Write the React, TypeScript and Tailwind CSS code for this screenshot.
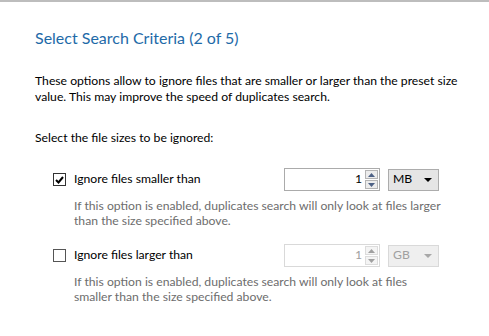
import React from "react";

const font = { fontFamily: 'Lato, "Open Sans", sans-serif' };

function Checkbox({ checked }: { checked: boolean }) {
  return (
    <div className={`w-[13px] h-[13px] border flex items-center justify-center bg-white ${checked ? "border-[#333333]" : "border-[#555555]"}`}>
      {checked && (
        <svg width="9" height="8" viewBox="0 0 9 8">
          <path d="M1 4 L3.5 6.5 L8 1" stroke="#000" strokeWidth="2" fill="none" />
        </svg>
      )}
    </div>
  );
}

function Spinner({ disabled }: { disabled?: boolean }) {
  const border = disabled ? "border-[#d9d9d9]" : "border-[#ababab]";
  const arrow = disabled ? "#a0a0a0" : "#4d6185";
  return (
    <div className={`w-[96px] h-[23px] border ${border} bg-white flex items-center`}>
      <div className={`flex-1 text-right pr-[3px] text-[12.2px] ${disabled ? "text-[#a0a0a0]" : "text-black"}`}>1</div>
      <div className="w-[13px] h-full flex flex-col gap-[1px] py-[1px] mr-[1px]">
        <div className={`flex-1 border ${disabled ? "border-[#dcdcdc] bg-[#f4f4f4]" : "border-[#b4b4b4] bg-[#ececec]"} flex items-center justify-center`}>
          <svg width="7" height="4" viewBox="0 0 7 4"><path d="M0 4 L3.5 0 L7 4 Z" fill={arrow} /></svg>
        </div>
        <div className={`flex-1 border ${disabled ? "border-[#dcdcdc] bg-[#f4f4f4]" : "border-[#b4b4b4] bg-[#ececec]"} flex items-center justify-center`}>
          <svg width="7" height="4" viewBox="0 0 7 4"><path d="M0 0 L7 0 L3.5 4 Z" fill={arrow} /></svg>
        </div>
      </div>
    </div>
  );
}

function Dropdown({ label, disabled }: { label: string; disabled?: boolean }) {
  return (
    <div className={`w-[51px] h-[22px] border flex items-center justify-between pl-[4px] pr-[6px] text-[12.2px] ${disabled ? "border-[#d9d9d9] bg-[#efefef] text-[#a0a0a0]" : "border-[#acacac] bg-[#e5e5e5] text-black"}`}>
      <span>{label}</span>
      <svg width="8" height="4" viewBox="0 0 8 4"><path d="M0 0 L8 0 L4 4 Z" fill={disabled ? "#a8a8a8" : "#000"} /></svg>
    </div>
  );
}

function Option({ checked, label, unit, desc }: { checked: boolean; label: string; unit: string; desc: React.ReactNode }) {
  return (
    <div className="pl-[18px]">
      <div className="flex items-center h-[23px]">
        <Checkbox checked={checked} />
        <span className="ml-[8px] w-[210px] text-[12.2px] text-black">{label}</span>
        <Spinner disabled={!checked} />
        <div className="ml-[8px]">
          <Dropdown label={unit} disabled={!checked} />
        </div>
      </div>
      <div className="pl-[21px] mt-[7px] text-[12.2px] leading-[15px] text-[#6d6d6d]">{desc}</div>
    </div>
  );
}

export default function App() {
  return (
    <div className="w-[489px] h-[336px] bg-white overflow-hidden" style={font}>
      <div className="h-[2px] bg-[#bdbdbd]" />
      <div className="pl-[35px]">
        <div className="mt-[26px] text-[16px] leading-[20px] text-[#1e6aa8]">Select Search Criteria (2 of 5)</div>
        <div className="mt-[25px] text-[12.2px] leading-[16px] text-black">
          These options allow to ignore files that are smaller or larger than the preset size
          <br />
          value. This may improve the speed of duplicates search.
        </div>
        <div className="mt-[25px] text-[12.2px] leading-[16px] text-black">Select the file sizes to be ignored:</div>
        <div className="mt-[22px]">
          <Option
            checked
            label="Ignore files smaller than"
            unit="MB"
            desc={<>If this option is enabled, duplicates search will only look at files larger<br />than the size specified above.</>}
          />
        </div>
        <div className="mt-[16px]">
          <Option
            checked={false}
            label="Ignore files larger than"
            unit="GB"
            desc={<>If this option is enabled, duplicates search will only look at files<br />smaller than the size specified above.</>}
          />
        </div>
      </div>
    </div>
  );
}
